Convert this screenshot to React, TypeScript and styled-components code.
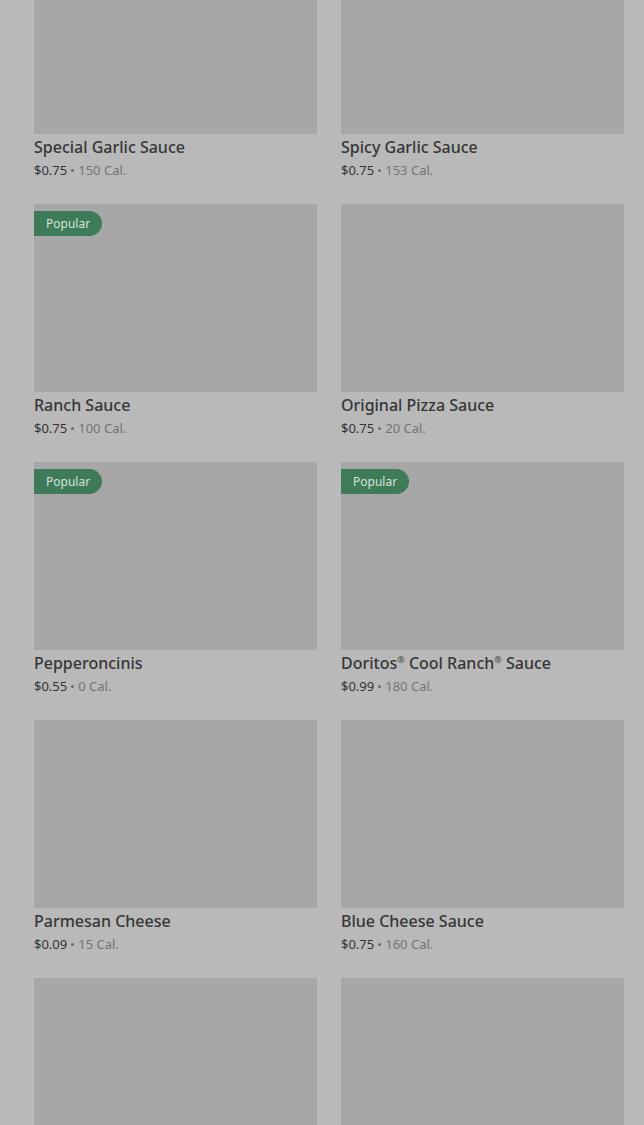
import React from "react";
import styled, { createGlobalStyle } from "styled-components";

const Global = createGlobalStyle`
  html, body { margin: 0; padding: 0; background: #b9b9b9; }
  body { font-family: "Noto Sans", "Liberation Sans", sans-serif; overflow: hidden; }
`;

const Page = styled.div`
  width: 644px;
  height: 1125px;
  overflow: hidden;
  background: #b9b9b9;
`;

const Grid = styled.div`
  display: grid;
  grid-template-columns: 283px 283px;
  column-gap: 24px;
  row-gap: 24px;
  padding: 0 20px 0 34px;
  margin-top: -54px;
`;

const Card = styled.div`
  display: flex;
  flex-direction: column;
`;

const Thumb = styled.div`
  position: relative;
  height: 188px;
  background: #a7a7a7;
`;

const Badge = styled.span`
  position: absolute;
  top: 7px;
  left: 0;
  height: 25px;
  padding: 0 12px;
  display: flex;
  align-items: center;
  background: #3e7b59;
  color: #d6e2da;
  font-size: 12px;
  border-radius: 0 13px 13px 0;
`;

const Title = styled.div`
  margin-top: 3px;
  font-size: 16px;
  line-height: 20px;
  font-weight: 500;
  color: #363636;
`;

const Reg = styled.sup`
  font-size: 9px;
  line-height: 0;
  vertical-align: 6px;
  color: #444444;
`;

const Meta = styled.div`
  margin-top: 3px;
  font-size: 13px;
  line-height: 20px;
  color: #343434;
  display: flex;
  align-items: center;
  gap: 4px;
`;

const Dot = styled.span`
  width: 3px;
  height: 3px;
  border-radius: 50%;
  background: #6a6a6a;
`;

const Cal = styled.span`
  color: #747474;
`;

type Item = { name: string; price: string; cal: string; popular?: boolean };

const items: Item[] = [
  { name: "Special Garlic Sauce", price: "$0.75", cal: "150 Cal." },
  { name: "Spicy Garlic Sauce", price: "$0.75", cal: "153 Cal." },
  { name: "Ranch Sauce", price: "$0.75", cal: "100 Cal.", popular: true },
  { name: "Original Pizza Sauce", price: "$0.75", cal: "20 Cal." },
  { name: "Pepperoncinis", price: "$0.55", cal: "0 Cal.", popular: true },
  { name: "Doritos® Cool Ranch® Sauce", price: "$0.99", cal: "180 Cal.", popular: true },
  { name: "Parmesan Cheese", price: "$0.09", cal: "15 Cal." },
  { name: "Blue Cheese Sauce", price: "$0.75", cal: "160 Cal." },
  { name: "", price: "", cal: "" },
  { name: "", price: "", cal: "" },
];

function renderName(name: string) {
  const parts = name.split("®");
  return parts.map((p, i) => (
    <React.Fragment key={i}>
      {p}
      {i < parts.length - 1 && <Reg>®</Reg>}
    </React.Fragment>
  ));
}

export default function App() {
  return (
    <Page>
      <Global />
      <Grid>
        {items.map((it, i) => (
          <Card key={i}>
            <Thumb>{it.popular && <Badge>Popular</Badge>}</Thumb>
            {it.name && (
              <>
                <Title>{renderName(it.name)}</Title>
                <Meta>
                  <span>{it.price}</span>
                  <Dot />
                  <Cal>{it.cal}</Cal>
                </Meta>
              </>
            )}
          </Card>
        ))}
      </Grid>
    </Page>
  );
}
